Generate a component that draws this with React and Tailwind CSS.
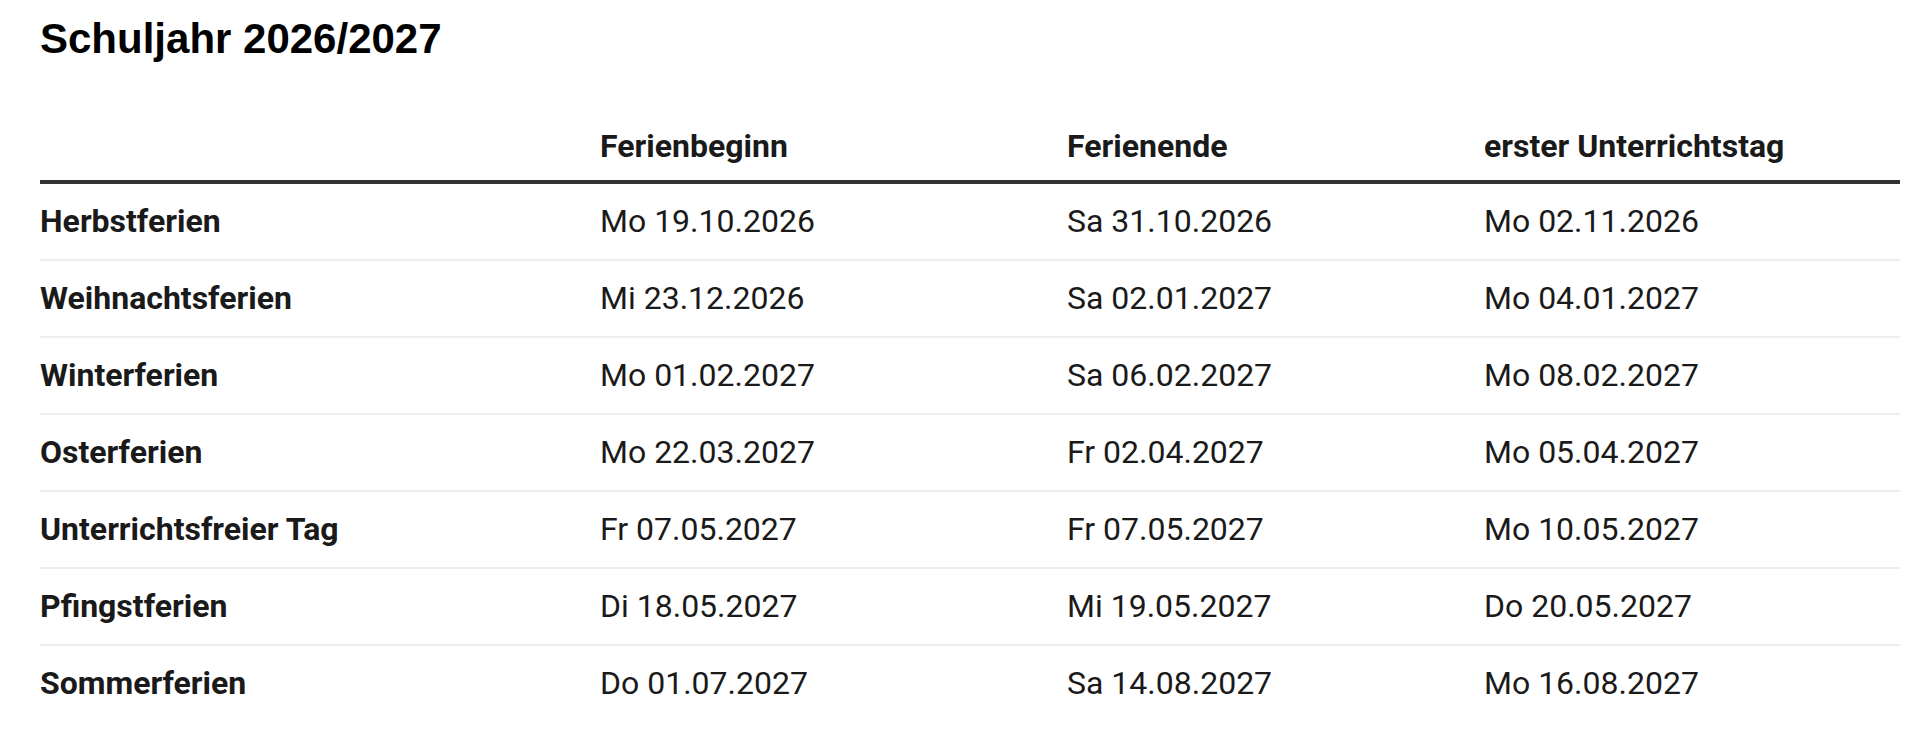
import React from "react";

const rows = [
  ["Herbstferien", "Mo 19.10.2026", "Sa 31.10.2026", "Mo 02.11.2026"],
  ["Weihnachtsferien", "Mi 23.12.2026", "Sa 02.01.2027", "Mo 04.01.2027"],
  ["Winterferien", "Mo 01.02.2027", "Sa 06.02.2027", "Mo 08.02.2027"],
  ["Osterferien", "Mo 22.03.2027", "Fr 02.04.2027", "Mo 05.04.2027"],
  ["Unterrichtsfreier Tag", "Fr 07.05.2027", "Fr 07.05.2027", "Mo 10.05.2027"],
  ["Pfingstferien", "Di 18.05.2027", "Mi 19.05.2027", "Do 20.05.2027"],
  ["Sommerferien", "Do 01.07.2027", "Sa 14.08.2027", "Mo 16.08.2027"],
];

export default function App() {
  return (
    <div className="min-h-[746px] bg-white pl-10 pr-5">
      <h1 className="pt-[15px] text-[42px] leading-[48px] font-bold text-black [font-family:'Liberation_Sans',Arial,sans-serif]">
        Schuljahr 2026/2027
      </h1>
      <table className="mt-[46px] w-[1860px] table-fixed border-separate border-spacing-0 text-[32px] leading-[48px] text-[#1a1a1a] [font-family:Roboto,'Noto_Sans',sans-serif]">
        <colgroup>
          <col className="w-[560px]" />
          <col className="w-[467px]" />
          <col className="w-[417px]" />
          <col />
        </colgroup>
        <thead>
          <tr>
            <th className="border-b-4 border-[#333333] pt-[13px] pb-[10px] text-left font-bold"></th>
            <th className="border-b-4 border-[#333333] pt-[13px] pb-[10px] text-left font-bold">Ferienbeginn</th>
            <th className="border-b-4 border-[#333333] pt-[13px] pb-[10px] text-left font-bold">Ferienende</th>
            <th className="border-b-4 border-[#333333] pt-[13px] pb-[10px] text-left font-bold">erster Unterrichtstag</th>
          </tr>
        </thead>
        <tbody>
          {rows.map((r, i) => {
            const last = i === rows.length - 1;
            const cell = last
              ? "pt-[13px] pb-[14px] text-left"
              : "pt-[13px] pb-[14px] text-left border-b-2 border-[#eeeeee]";
            return (
              <tr key={r[0]}>
                <td className={cell + " font-bold"}>{r[0]}</td>
                <td className={cell}>{r[1]}</td>
                <td className={cell}>{r[2]}</td>
                <td className={cell}>{r[3]}</td>
              </tr>
            );
          })}
        </tbody>
      </table>
    </div>
  );
}
